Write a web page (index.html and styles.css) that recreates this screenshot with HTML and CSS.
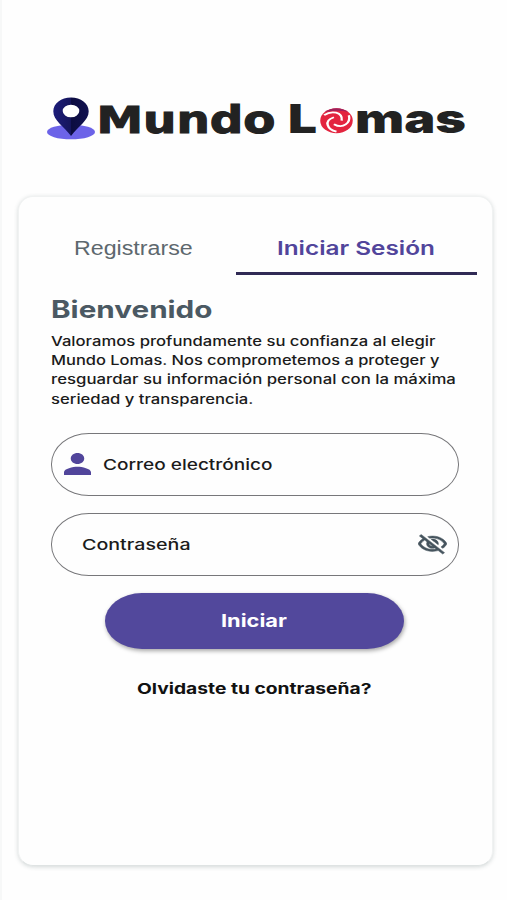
FILE: index.html
```
<!DOCTYPE html>
<html lang="es">
<head>
    <meta charset="UTF-8">
    <meta name="viewport" content="width=device-width, initial-scale=1.0">
    <title>Mundo Lomas</title>
    <link rel="stylesheet" href="styles.css">
</head>
<body>
    <!-- Logo -->
    <header class="logo">
        <svg width="420" height="46" viewBox="46 95 420 46" role="img" aria-label="Mundo Lomas">
            <defs>
                <linearGradient id="pin" x1="0" x2="1">
                    <stop offset="0" stop-color="#1c1c7a"/>
                    <stop offset="0.5" stop-color="#15155c"/>
                    <stop offset="0.51" stop-color="#0c0c40"/>
                    <stop offset="1" stop-color="#111150"/>
                </linearGradient>
            </defs>
            <ellipse cx="71" cy="132" rx="24" ry="7.300" fill="#6c63e8"/>
            <path fill="url(#pin)" fill-rule="evenodd" d="M71 97.500c-9.800 0-17.700 6-17.700 13.800 0 9.500 10.500 14.700 17.700 24.700 7.200-10 17.700-15.200 17.700-24.700 0-7.800-7.900-13.800-17.700-13.800zm0 7.200a8.300 6.300 0 1 1 0 12.600 8.300 6.300 0 0 1 0-12.600z"/>
            <text class="logo-mundo" x="96.500" y="133" textLength="179" lengthAdjust="spacingAndGlyphs">Mundo</text>
            <text class="logo-lomas" x="288" y="132.500" textLength="29" lengthAdjust="spacingAndGlyphs">L</text>
            <g transform="translate(336.500 120.700) scale(1.300 1)">
                <circle r="12.500" fill="#e3243f"/>
                <path d="M-9-8.700A12.500 12.500 0 0 1 9-8.700Q2-11-9-8.700z" fill="#a0205a"/>
                <g fill="none" stroke="#fff" stroke-width="1.800">
                    <path id="swirl" d="M-9.500-5.500C-4-10.500 5-9 4 0"/>
                    <use href="#swirl" transform="rotate(120)"/>
                    <use href="#swirl" transform="rotate(240)"/>
                </g>
            </g>
            <text class="logo-lomas" x="355" y="132.500" textLength="111" lengthAdjust="spacingAndGlyphs">mas</text>
        </svg>
    </header>

    <main class="card">
        <nav class="tabs">
            <a class="tab tab-register"><span>Registrarse</span></a>
            <a class="tab tab-login"><span>Iniciar Sesión</span></a>
        </nav>

        <section class="content">
            <h1><span>Bienvenido</span></h1>
            <p class="intro">
                <span>Valoramos profundamente su confianza al elegir</span>
                <span>Mundo Lomas. Nos comprometemos a proteger y</span>
                <span>resguardar su información personal con la máxima</span>
                <span>seriedad y transparencia.</span>
            </p>

            <form class="form">
                <label class="field field-email">
                    <svg class="icon-user" width="27" height="22" viewBox="4 4 16 16" preserveAspectRatio="none">
                        <path fill="#51459b" d="M12 12c2.210 0 4-1.790 4-4s-1.790-4-4-4-4 1.790-4 4 1.790 4 4 4zm0 2c-2.670 0-8 1.340-8 4v2h16v-2c0-2.660-5.330-4-8-4z"/>
                    </svg>
                    <span>Correo electrónico</span>
                </label>
                <label class="field field-password">
                    <span>Contraseña</span>
                    <svg class="icon-eye" width="29" height="21" viewBox="1 2 22 20.500" preserveAspectRatio="none">
                        <path fill="#46545e" stroke="#46545e" stroke-width="0.400" d="M12 6c3.790 0 7.170 2.130 8.820 5.500-.59 1.220-1.420 2.270-2.410 3.120l1.410 1.410c1.390-1.230 2.490-2.770 3.180-4.530C21.270 7.110 17 4 12 4c-1.270 0-2.490.2-3.640.57l1.650 1.650C10.660 6.090 11.320 6 12 6zm-1.070 1.140L13 9.210c.57.25 1.030.71 1.280 1.280l2.070 2.070c.08-.34.14-.7.14-1.070C16.500 9.010 14.480 7 12 7c-.37 0-.72.05-1.070.14zM2.010 3.870l2.680 2.680C3.060 7.830 1.770 9.530 1 11.500 2.730 15.890 7 19 12 19c1.520 0 2.980-.29 4.320-.82l3.420 3.420 1.410-1.410L3.420 2.450 2.010 3.870zm7.500 7.500l2.610 2.610c-.04.01-.08.02-.12.02-1.380 0-2.500-1.120-2.500-2.500 0-.05.01-.08.010-.13zm-3.400-3.400l1.750 1.750c-.23.55-.36 1.150-.36 1.780 0 2.480 2.020 4.500 4.500 4.500.63 0 1.230-.13 1.770-.36l.98.98c-.88.24-1.800.38-2.750.38-3.790 0-7.170-2.130-8.820-5.500.7-1.430 1.720-2.610 2.930-3.530z"/>
                    </svg>
                </label>
                <button type="button" class="submit"><span>Iniciar</span></button>
            </form>

            <a class="forgot"><span>Olvidaste tu contraseña?</span></a>
        </section>
    </main>
</body>
</html>
```
FILE: styles.css
```
* {
    box-sizing: border-box;
}
body {
    margin: 0;
    height: 900px;
    background-color: #fefefe;
    border-left: 2px solid #f7f8f8;
    font-family: Inter, "Open Sans", sans-serif;
    color: #1b1b1b;
    overflow: hidden;
}
.logo {
    height: 196px;
    padding: 95px 0 0 44px;
}
.logo svg {
    display: block;
}
.logo-mundo {
    font: bold 36.500px "DejaVu Sans", sans-serif;
    fill: #222;
    stroke: #222;
    stroke-width: 1px;
}
.logo-lomas {
    font: 900 40px Inter, sans-serif;
    fill: #222;
}
.card {
    width: 475px;
    height: 670px;
    margin-left: 16px;
    padding: 26px 15px 0 18px;
    background-color: #fefefe;
    border: 1px solid #f0f2f2;
    border-bottom-color: #dfe3e3;
    border-radius: 15px;
    box-shadow: 0 1px 4px rgba(60, 80, 80, 0.22);
}

/* la tipografía es ancha, cada texto se estira en horizontal */
.card span {
    display: inline-block;
    white-space: nowrap;
    transform-origin: left center;
}

/* pestañas */
.tabs {
    display: grid;
    grid-template-columns: 199px 241px;
    height: 52px;
}
.tab {
    display: flex;
    align-items: center;
    height: 52px;
}
.tab-register {
    padding: 0 0 2px 37px;
    font: 19.500px "Liberation Sans", Arial, sans-serif;
    color: #5d686e;
}
.tab-register span { transform: scaleX(1.190); }
.tab-login {
    padding: 1px 0 0 41px;
    font-size: 19px;
    font-weight: 600;
    color: #51459b;
    border-bottom: 3px solid #302a55;
}
.tab-login span { transform: scaleX(1.280); }

.content {
    padding-left: 14px;
}
h1 {
    margin: 18px 0 0;
    font-size: 24px;
    line-height: 34px;
    font-weight: 700;
    color: #4b5963;
}
h1 span { transform: scaleX(1.235); }
.intro {
    display: flex;
    flex-direction: column;
    align-items: flex-start;
    margin: 5px 0 0;
    font-size: 13px;
    line-height: 19.200px;
    font-weight: 500;
}
.intro span { transform: scaleX(1.280); }
.intro span:nth-child(2) { transform: scaleX(1.265); }
.intro span:nth-child(3) { transform: scaleX(1.290); }

/* formulario */
.form {
    display: flex;
    flex-direction: column;
    gap: 17px;
    margin-top: 24px;
}
.field {
    display: flex;
    align-items: center;
    width: 408px;
    height: 63px;
    border: 1px solid #77777a;
    border-radius: 38px / 31px;
    font-size: 15px;
    font-weight: 500;
}
.field-email {
    padding-left: 12px;
    gap: 12px;
}
.field-email span { transform: scaleX(1.268); }
.field-password {
    padding: 0 11px 0 30px;
    justify-content: space-between;
}
.field-password span { transform: scaleX(1.310); }
.submit {
    width: 299px;
    height: 56px;
    margin-left: 54px;
    padding: 0 0 0 116px;
    border: none;
    border-radius: 37px / 28px;
    background-color: #52489c;
    box-shadow: 1px 2px 4px rgba(0, 0, 0, 0.35);
    color: white;
    font-family: inherit;
    font-size: 17.500px;
    font-weight: 700;
    text-align: left;
}
.submit span { transform: scaleX(1.245); }
.forgot {
    display: block;
    margin: 30px 0 0 86px;
    font-size: 15px;
    line-height: 20px;
    font-weight: 700;
    color: #111;
}
.forgot span { transform: scaleX(1.282); }
```
